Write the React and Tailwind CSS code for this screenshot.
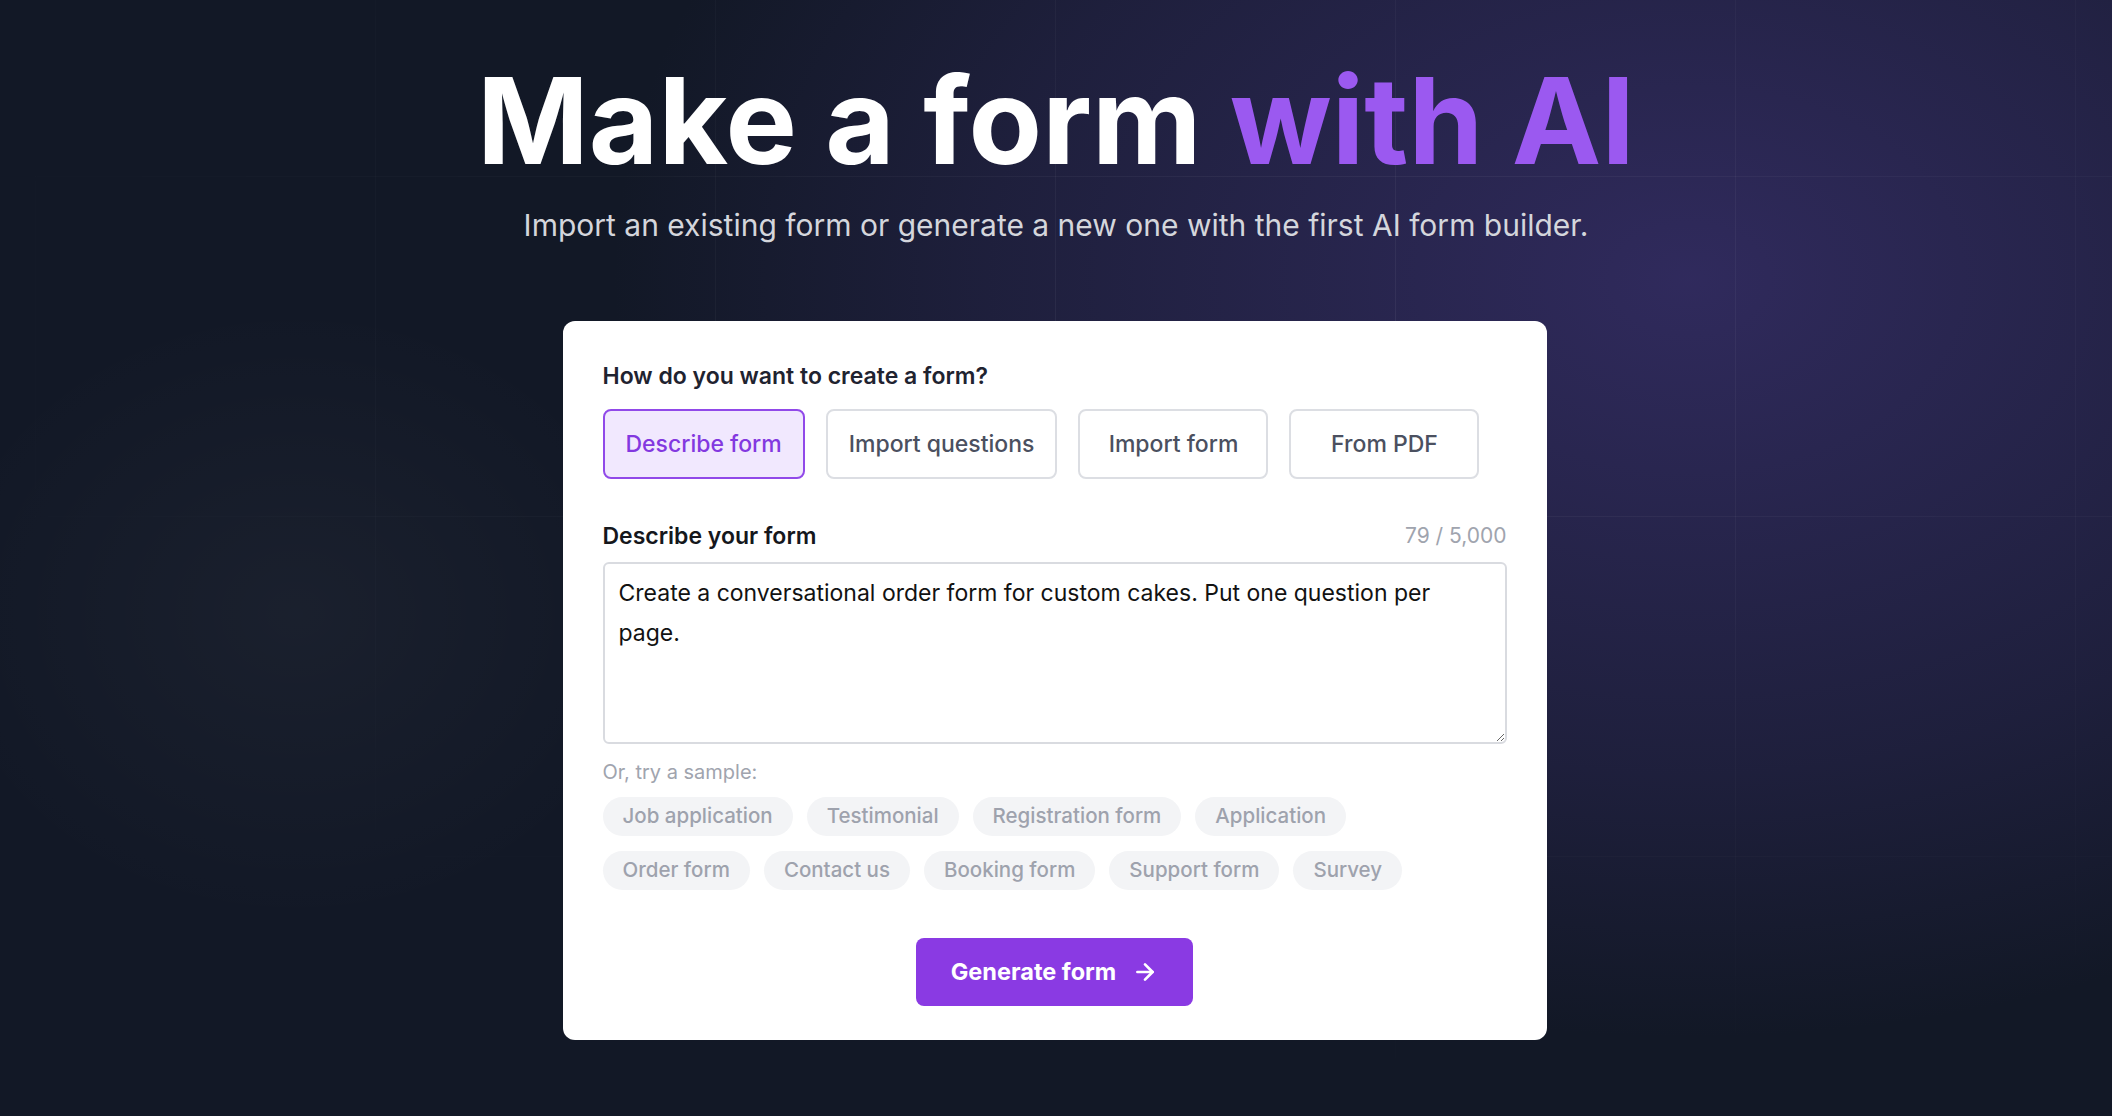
import React, { useState } from 'react';
import { ArrowRight } from 'lucide-react';

const modes = ['Describe form', 'Import questions', 'Import form', 'From PDF'];

const sampleRows = [
  ['Job application', 'Testimonial', 'Registration form', 'Application'],
  ['Order form', 'Contact us', 'Booking form', 'Support form', 'Survey'],
];

const prompt = 'Create a conversational order form for custom cakes. Put one question per page.';

const App = () => {
  const [mode, setMode] = useState('Describe form');
  const [text, setText] = useState(prompt);

  return (
    <section className="relative h-screen w-full overflow-hidden bg-[#121826] font-['Inter',sans-serif]">
      {/* Glow */}
      <div className="absolute inset-0 bg-[radial-gradient(ellipse_60%_80%_at_80%_25%,rgba(64,52,122,0.65),rgba(62,50,118,0.28)_55%,transparent_85%)]"></div>
      <div className="absolute inset-0 bg-[radial-gradient(ellipse_25%_40%_at_14%_55%,rgba(255,255,255,0.035),transparent_70%)]"></div>

      {/* Grid */}
      <div className="absolute inset-0 bg-[linear-gradient(to_right,rgba(255,255,255,0.06)_1px,transparent_1px),linear-gradient(to_bottom,rgba(255,255,255,0.06)_1px,transparent_1px)] bg-[size:340px_340px] bg-[position:35px_176px] [mask-image:radial-gradient(ellipse_80%_80%_at_65%_30%,black,transparent_90%)]"></div>

      <div className="relative z-10 flex flex-col items-center pt-[60px]">
        <h1 className="text-[120px] leading-[122px] font-bold text-white whitespace-nowrap">
          Make a form <span className="text-[#9b59f0]">with AI</span>
        </h1>
        <p className="mt-[25px] text-[30px] leading-[36px] text-[#d4d6dc]">
          Import an existing form or generate a new one with the first AI form builder.
        </p>

        {/* Card */}
        <div className="mt-[78px] mr-[3px] w-[984px] rounded-xl bg-white px-10 pt-10 pb-[34px]">
          <div className="text-[23px] leading-[30px] font-semibold text-[#1f2330]">
            How do you want to create a form?
          </div>
          <div className="mt-[18px] flex gap-[21px]">
            {modes.map((m) => (
              <button
                key={m}
                onClick={() => setMode(m)}
                className={
                  m === mode
                    ? 'h-[70px] min-w-[190px] px-[21px] rounded-lg border-2 border-[#9149e9] bg-[#f1e8fe] text-[23px] font-medium text-[#8338e0]'
                    : 'h-[70px] min-w-[190px] px-[21px] rounded-lg border-2 border-[#dcdee3] bg-white text-[23px] font-medium text-[#4b5060]'
                }
              >
                {m}
              </button>
            ))}
          </div>

          <div className="mt-[42px] flex items-center justify-between">
            <span className="text-[23px] leading-[30px] font-semibold text-[#15171c]">Describe your form</span>
            <span className="text-[21px] leading-[30px] text-[#a0a4ae]">{text.length} / 5,000</span>
          </div>
          <textarea
            value={text}
            onChange={(e) => setText(e.target.value)}
            className="mt-[11px] block h-[182px] w-full rounded-md border-2 border-[#d9dbe0] px-[14px] py-[9px] text-[23px] leading-[40px] text-[#121212] outline-none"
          />

          <div className="mt-[15px] text-[20px] leading-[26px] text-[#a0a4ae]">Or, try a sample:</div>
          <div className="mt-[12px] flex flex-col gap-[15px]">
            {sampleRows.map((row, i) => (
              <div key={i} className="flex gap-[14px]">
                {row.map((s) => (
                  <button
                    key={s}
                    className="h-[39px] rounded-full bg-[#f3f4f6] px-5 text-[20.5px] font-medium text-[#9ea2ad]"
                  >
                    {s}
                  </button>
                ))}
              </div>
            ))}
          </div>

          <div className="mt-[48px] flex justify-center">
            <button className="flex h-[68px] w-[277px] items-center justify-center gap-4 rounded-lg bg-[#8a3ae3] text-[23.5px] font-bold text-white">
              Generate form
              <ArrowRight size={26} strokeWidth={2.5} />
            </button>
          </div>
        </div>
      </div>
    </section>
  );
};

export default App;
